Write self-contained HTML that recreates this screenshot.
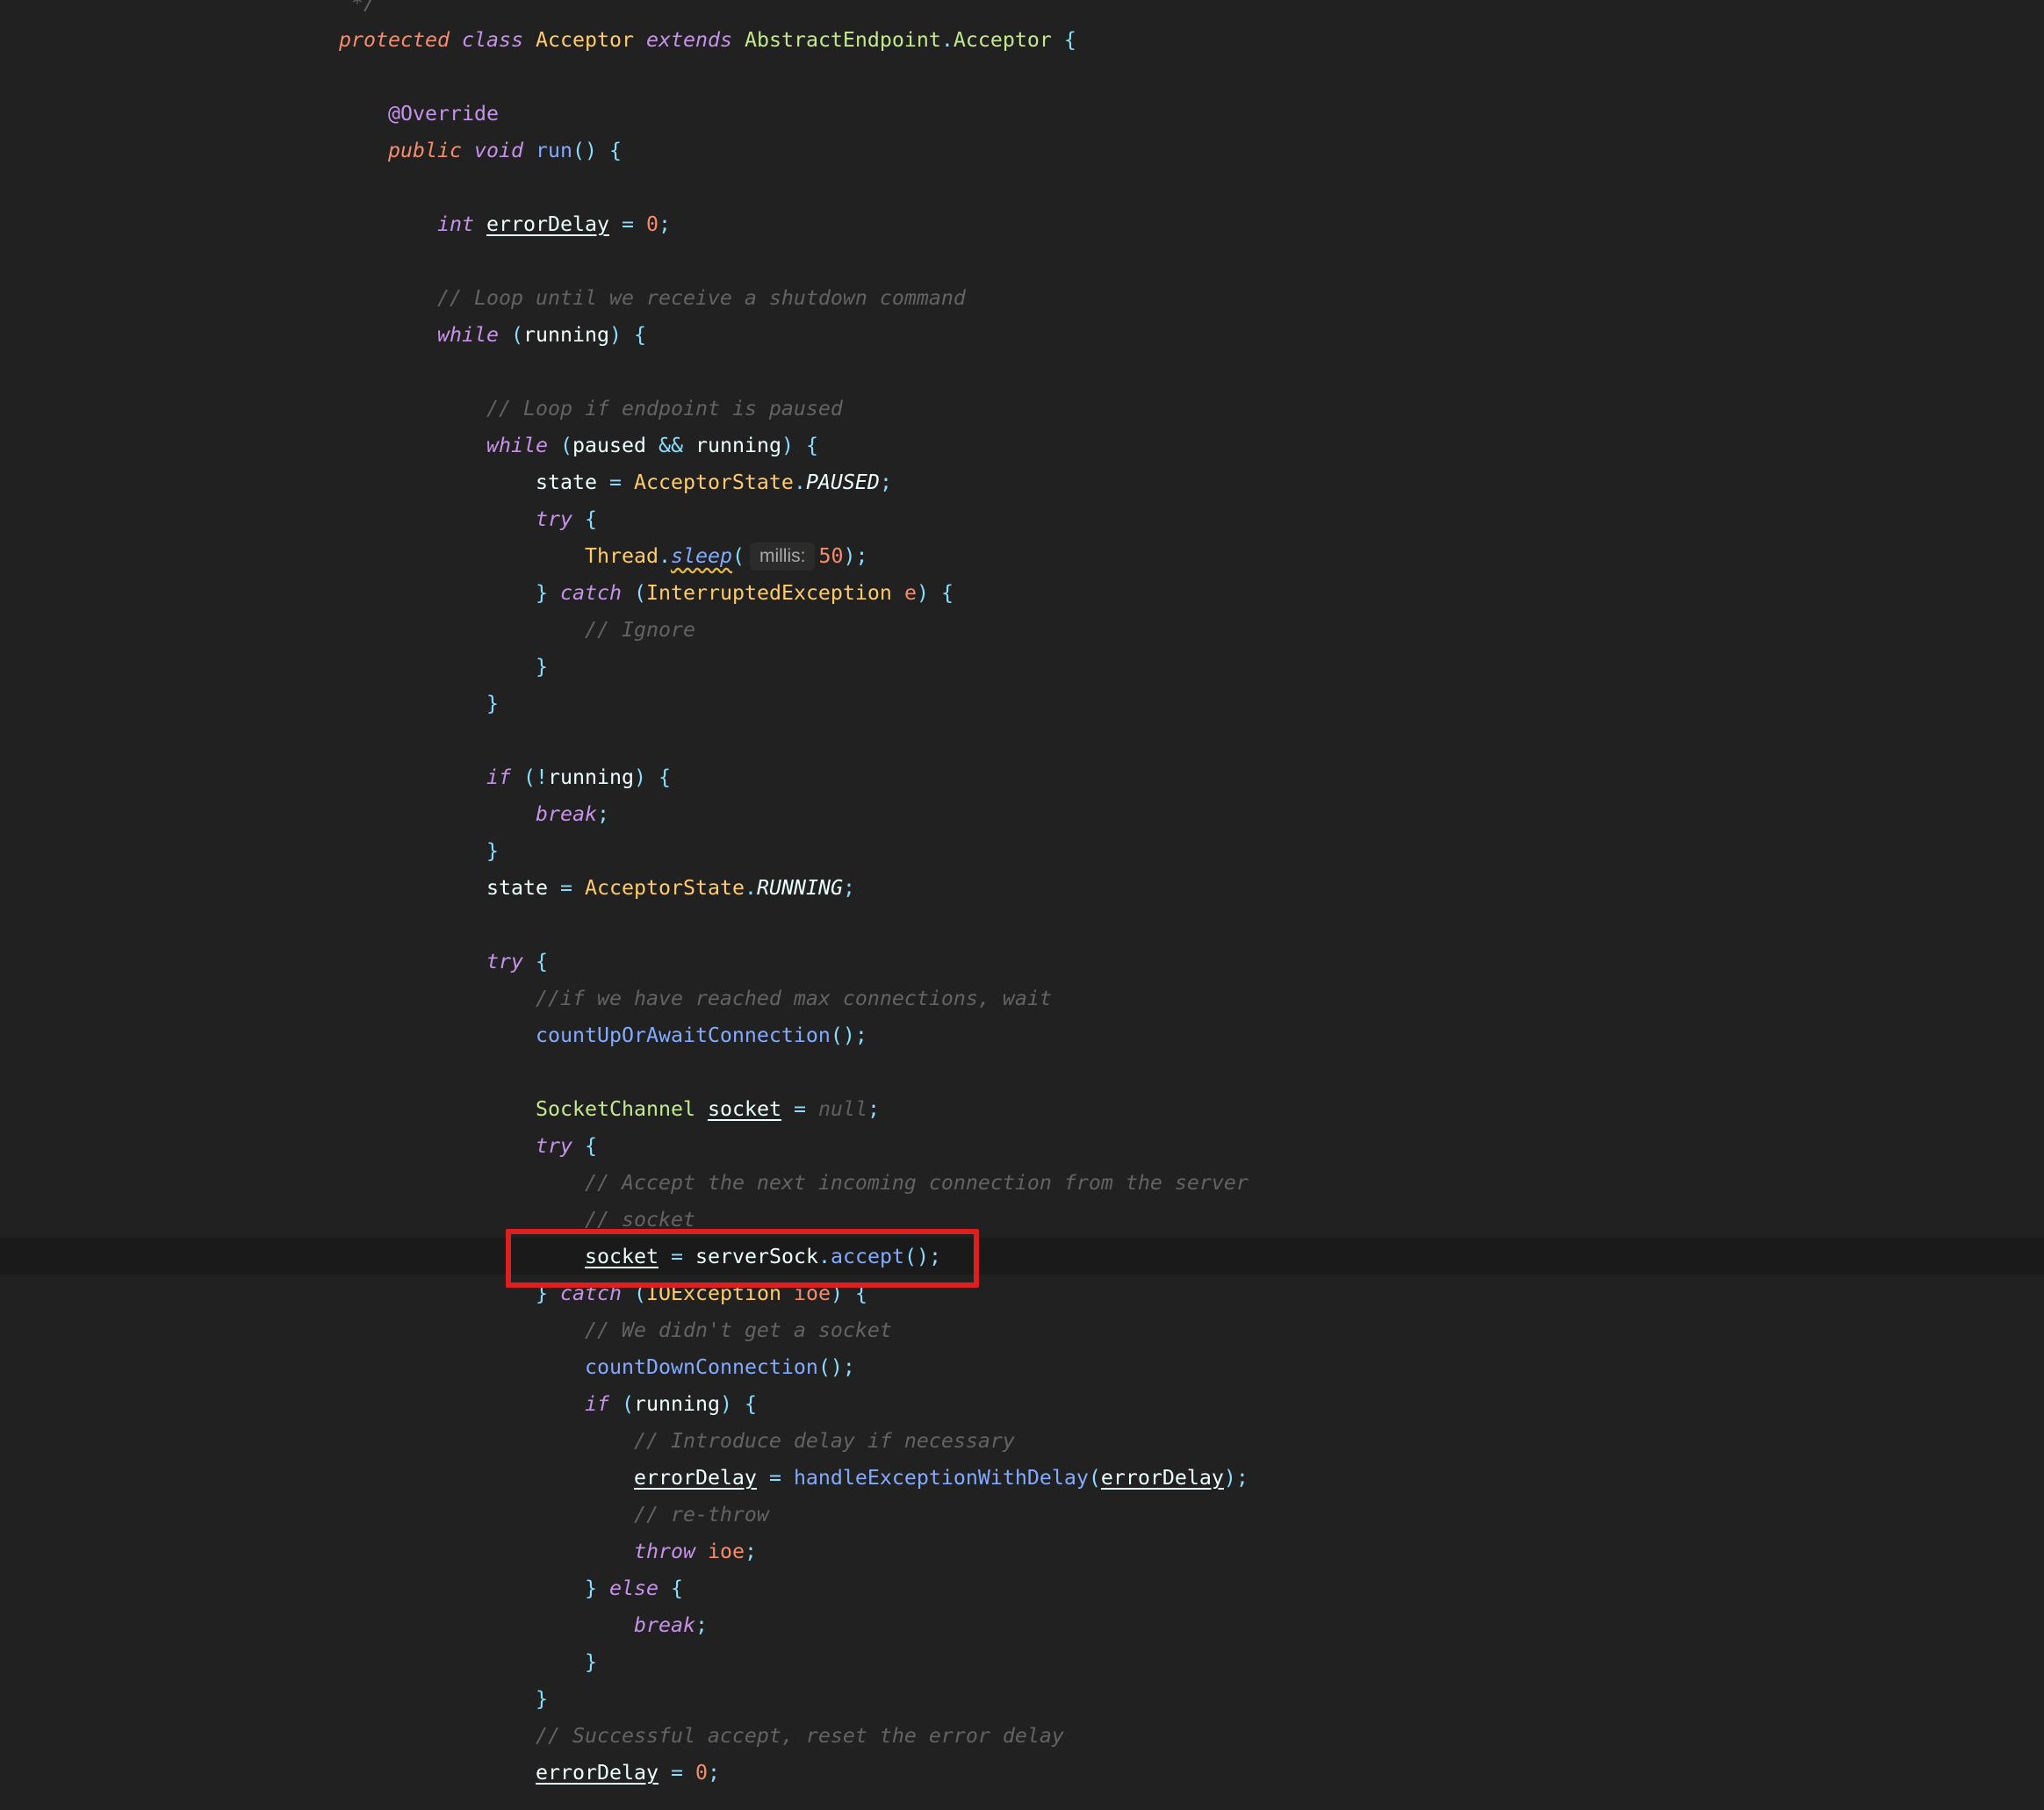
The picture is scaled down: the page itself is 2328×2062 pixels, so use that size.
<!DOCTYPE html>
<html><head><meta charset="utf-8"><style>
html,body{margin:0;padding:0;background:#212121;width:2328px;height:2062px;overflow:hidden;position:relative}
.hl{position:absolute;left:0;top:1410px;width:2328px;height:42px;background:#1a1a1a}
.box{position:absolute;left:576px;top:1400px;width:527px;height:55px;border:6px solid #dd1f1f;border-radius:2px}
pre{position:absolute;left:386px;top:-17px;margin:0;font-family:"DejaVu Sans Mono","Liberation Mono",monospace;font-size:23.25px;letter-spacing:0;line-height:42px;color:#eeffff}
.c{color:#636363;font-style:italic}
.k{color:#c792ea;font-style:italic}
.o{color:#f78c6c;font-style:italic}
.y{color:#ffcb6b}
.g{color:#c3e88d}
.p{color:#89ddff}
.f{color:#82aaff}
.n{color:#f78c6c}
.u{text-decoration:underline;text-underline-offset:4px}
.i{font-style:italic}
.nl{color:#5f5f5f;font-style:italic}
.a{color:#c792ea}
.w{text-decoration:underline wavy #e5b94a;text-underline-offset:5px}
.hint{display:inline-block;background:#2b2b2b;color:#a9a9a9;font-family:"Liberation Sans",sans-serif;font-size:21px;letter-spacing:0;border-radius:6px;padding:0 11px;line-height:32px;margin:0 4px 0 6px;vertical-align:1px}
</style></head><body>
<div class="hl"></div>
<pre><span class="c"> */</span>
<span class="o">protected</span> <span class="k">class</span> <span class="y">Acceptor</span> <span class="k">extends</span> <span class="g">AbstractEndpoint</span><span class="p">.</span><span class="g">Acceptor</span> <span class="p">{</span>

    <span class="a">@Override</span>
    <span class="o">public</span> <span class="k">void</span> <span class="f">run</span><span class="p">()</span> <span class="p">{</span>

        <span class="k">int</span> <span class="u">errorDelay</span> <span class="p">=</span> <span class="n">0</span><span class="p">;</span>

        <span class="c">// Loop until we receive a shutdown command</span>
        <span class="k">while</span> <span class="p">(</span>running<span class="p">)</span> <span class="p">{</span>

            <span class="c">// Loop if endpoint is paused</span>
            <span class="k">while</span> <span class="p">(</span>paused <span class="p">&amp;&amp;</span> running<span class="p">)</span> <span class="p">{</span>
                state <span class="p">=</span> <span class="y">AcceptorState</span><span class="p">.</span><span class="i">PAUSED</span><span class="p">;</span>
                <span class="k">try</span> <span class="p">{</span>
                    <span class="y">Thread</span><span class="p">.</span><span class="f i w">sleep</span><span class="p">(</span><span class="hint">millis:</span><span class="n">50</span><span class="p">);</span>
                <span class="p">}</span> <span class="k">catch</span> <span class="p">(</span><span class="y">InterruptedException</span> <span class="n">e</span><span class="p">)</span> <span class="p">{</span>
                    <span class="c">// Ignore</span>
                <span class="p">}</span>
            <span class="p">}</span>

            <span class="k">if</span> <span class="p">(!</span>running<span class="p">)</span> <span class="p">{</span>
                <span class="k">break</span><span class="p">;</span>
            <span class="p">}</span>
            state <span class="p">=</span> <span class="y">AcceptorState</span><span class="p">.</span><span class="i">RUNNING</span><span class="p">;</span>

            <span class="k">try</span> <span class="p">{</span>
                <span class="c">//if we have reached max connections, wait</span>
                <span class="f">countUpOrAwaitConnection</span><span class="p">();</span>

                <span class="g">SocketChannel</span> <span class="u">socket</span> <span class="p">=</span> <span class="nl">null</span><span class="p">;</span>
                <span class="k">try</span> <span class="p">{</span>
                    <span class="c">// Accept the next incoming connection from the server</span>
                    <span class="c">// socket</span>
                    <span class="u">socket</span> <span class="p">=</span> serverSock<span class="p">.</span><span class="f">accept</span><span class="p">();</span>
                <span class="p">}</span> <span class="k">catch</span> <span class="p">(</span><span class="y">IOException</span> <span class="n">ioe</span><span class="p">)</span> <span class="p">{</span>
                    <span class="c">// We didn't get a socket</span>
                    <span class="f">countDownConnection</span><span class="p">();</span>
                    <span class="k">if</span> <span class="p">(</span>running<span class="p">)</span> <span class="p">{</span>
                        <span class="c">// Introduce delay if necessary</span>
                        <span class="u">errorDelay</span> <span class="p">=</span> <span class="f">handleExceptionWithDelay</span><span class="p">(</span><span class="u">errorDelay</span><span class="p">);</span>
                        <span class="c">// re-throw</span>
                        <span class="k">throw</span> <span class="n">ioe</span><span class="p">;</span>
                    <span class="p">}</span> <span class="k">else</span> <span class="p">{</span>
                        <span class="k">break</span><span class="p">;</span>
                    <span class="p">}</span>
                <span class="p">}</span>
                <span class="c">// Successful accept, reset the error delay</span>
                <span class="u">errorDelay</span> <span class="p">=</span> <span class="n">0</span><span class="p">;</span>
</pre>
<div class="box"></div>
</body></html>
